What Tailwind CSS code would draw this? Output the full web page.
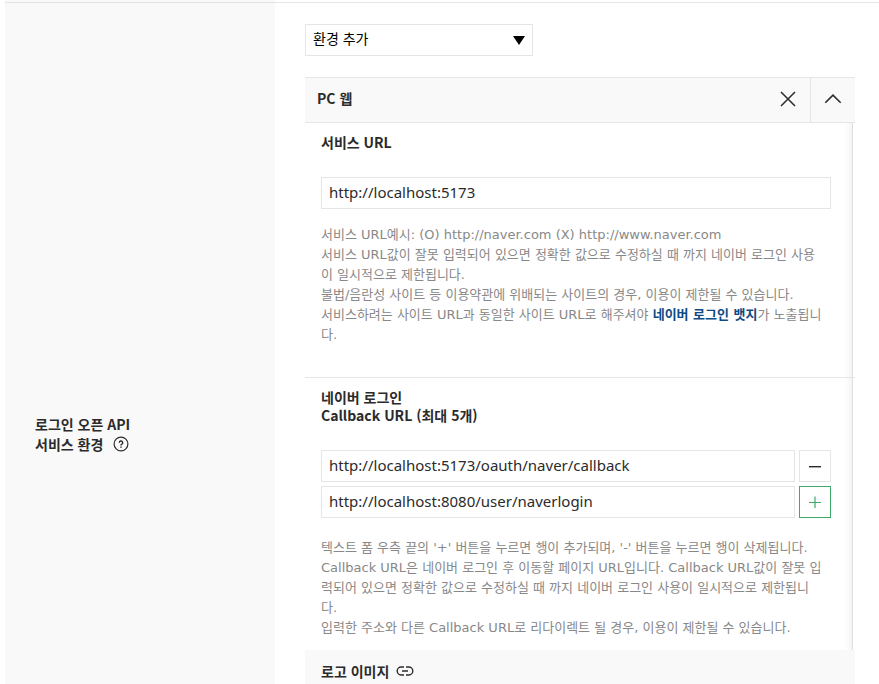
<!DOCTYPE html>
<html lang="ko">
<head>
<meta charset="utf-8">
<meta name="viewport" content="width=device-width, initial-scale=1">
<title>로그인 오픈 API 서비스 환경</title>
<script src="https://cdn.jsdelivr.net/npm/@tailwindcss/browser@4"></script>
</head>
<body class="h-screen overflow-hidden bg-white pl-[5px] font-['Noto_Sans_CJK_KR',sans-serif] text-sm text-[#2b2b2b]">
<div class="flex h-0.5"><div class="w-[270px] bg-[#f9f9f9]"></div></div>
<main class="flex min-h-screen border-t border-[#e5e5e5]">
  <div class="w-[270px] shrink-0 bg-[#f9f9f9] pt-[411px] pl-[30px]">
    <h2 class="text-sm leading-5 font-bold">로그인 오픈 API<br>
      <span class="flex items-center gap-2.5">서비스 환경
        <button type="button" aria-label="도움말" class="size-4">
          <svg viewBox="0 0 16 16" class="size-4" fill="none" stroke="#2b2b2b"><circle cx="8" cy="8" r="6.9" stroke-width="1.2"/><path d="M6.300 6.700a1.700 1.700 0 1 1 2.500 1.500q-.8.4-.8 1.200" stroke-width="1.400"/><path d="M8 10.400v1.400" stroke-width="1.500"/></svg>
        </button>
      </span>
    </h2>
  </div>

  <div class="min-w-0 flex-1 pt-[21px] pr-6 pl-[30px]">
    <div class="relative w-[228px]">
      <select aria-label="환경 추가" class="block h-8 w-full appearance-none border border-[#e5e5e5] bg-white px-[7px] pb-1 text-sm text-black">
        <option>환경 추가</option>
      </select>
      <svg viewBox="0 0 12 9" class="pointer-events-none absolute top-3 right-2 h-[9px] w-3"><path d="M0 0h12L6 9z" fill="#000"/></svg>
    </div>

    <section class="mt-[21px]">
      <header class="flex h-[46px] items-stretch border-y border-[#e5e5e5] bg-[#f9f9f9]">
        <h3 class="flex flex-1 items-center pb-1 pl-3 font-bold">PC 웹</h3>
        <button type="button" aria-label="삭제" class="flex w-[45px] items-center justify-center pb-0.5">
          <svg viewBox="0 0 16 16" class="size-4" fill="none" stroke="#2b2b2b" stroke-width="1.5"><path d="M1 1l14 14M15 1L1 15"/></svg>
        </button>
        <button type="button" aria-label="접기" class="flex w-[45px] items-center justify-center border-l border-[#e5e5e5] pb-0.5">
          <svg viewBox="0 0 18 12" class="h-3 w-[18px]" fill="none" stroke="#2b2b2b" stroke-width="1.6"><path d="M1.300 9.800L9 2.200l7.700 7.600"/></svg>
        </button>
      </header>

      <div class="relative">
        <div class="absolute inset-y-0 right-0.5 w-2 border-r border-[#dedede] bg-linear-to-r from-white to-[#f4f4f4]"></div>
        <div class="relative border-b border-[#e5e5e5] px-4 pt-[9px] pb-8">
          <label for="service" class="block leading-5 font-bold">서비스 URL</label>
          <input id="service" value="http://localhost:5173" class="mt-[25px] block h-8 w-[calc(100%-8px)] border border-[#e5e5e5] bg-white px-[7px] pb-0.5 font-['Noto_Sans','Noto_Sans_CJK_KR',sans-serif] text-[15px]">
          <p class="mt-4 font-['DejaVu_Sans','Noto_Sans_CJK_KR',sans-serif] text-[13px] leading-5 whitespace-nowrap text-[#888]">
            서비스 URL예시: (O) http://naver.com (X) http://www.naver.com<br>
            서비스 URL값이 잘못 입력되어 있으면 정확한 값으로 수정하실 때 까지 네이버 로그인 사용<br>
            이 일시적으로 제한됩니다.<br>
            불법/음란성 사이트 등 이용약관에 위배되는 사이트의 경우, 이용이 제한될 수 있습니다.<br>
            서비스하려는 사이트 URL과 동일한 사이트 URL로 해주셔야 <a href="#" class="font-bold text-[#0d4a84]">네이버 로그인 뱃지</a>가 노출됩니<br>
            다.
          </p>
        </div>

        <div class="relative px-4 pt-2.5 pb-3">
          <h4 class="leading-[18px] font-bold">네이버 로그인<br>Callback URL (최대 5개)</h4>
          <div class="mt-[26px] mr-2 flex flex-col gap-1">
            <div class="flex gap-1">
              <input aria-label="Callback URL 1" value="http://localhost:5173/oauth/naver/callback" class="h-8 min-w-0 flex-1 border border-[#e5e5e5] bg-white px-[7px] pb-0.5 font-['Noto_Sans','Noto_Sans_CJK_KR',sans-serif] text-[15px]">
              <button type="button" aria-label="행 삭제" class="flex size-8 items-center justify-center border border-[#e5e5e5] bg-white"><svg viewBox="0 0 12 12" class="size-3"><path d="M0 6.700h12" stroke="#2b2b2b" stroke-width="1.400"/></svg></button>
            </div>
            <div class="flex gap-1">
              <input aria-label="Callback URL 2" value="http://localhost:8080/user/naverlogin" class="h-8 min-w-0 flex-1 border border-[#e5e5e5] bg-white px-[7px] pb-0.5 font-['Noto_Sans','Noto_Sans_CJK_KR',sans-serif] text-[15px]">
              <button type="button" aria-label="행 추가" class="flex size-8 items-center justify-center border border-[#3eaa69] bg-white"><svg viewBox="0 0 12 12" class="size-3"><path d="M0 6.500h12M6 .5v12" stroke="#3eaa69" stroke-width="1.200"/></svg></button>
            </div>
          </div>
          <p class="mt-5 font-['DejaVu_Sans','Noto_Sans_CJK_KR',sans-serif] text-[13px] leading-5 whitespace-nowrap text-[#888]">
            텍스트 폼 우측 끝의 '+' 버튼을 누르면 행이 추가되며, '-' 버튼을 누르면 행이 삭제됩니다.<br>
            Callback URL은 네이버 로그인 후 이동할 페이지 URL입니다. Callback URL값이 잘못 입<br>
            력되어 있으면 정확한 값으로 수정하실 때 까지 네이버 로그인 사용이 일시적으로 제한됩니<br>
            다.<br>
            입력한 주소와 다른 Callback URL로 리다이렉트 될 경우, 이용이 제한될 수 있습니다.
          </p>
        </div>
      </div>

      <div class="flex h-[60px] items-start gap-[7px] bg-[#f9f9f9] pt-[11px] pl-4">
        <h3 class="leading-5 font-bold">로고 이미지</h3>
        <svg viewBox="0 0 18 12" class="mt-1 h-3 w-[18px]" fill="none" stroke="#2b2b2b" stroke-width="1.400"><path d="M8 2H5.200a4 4 0 0 0 0 8H8M10 2h2.800a4 4 0 0 1 0 8H10M6 6h6"/></svg>
      </div>
    </section>
  </div>
</main>
</body>
</html>
